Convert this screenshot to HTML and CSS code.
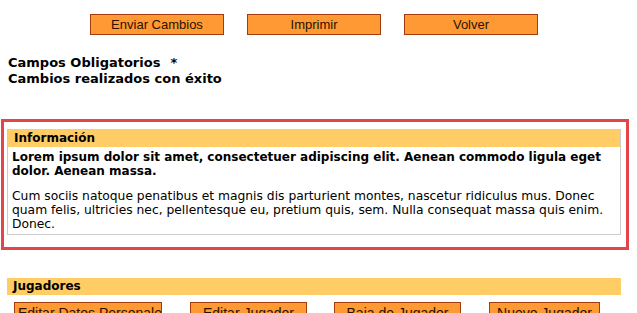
FILE: index.html
```html
<!DOCTYPE html>
<html>

<head>
    <title>Ficha del Equipo</title>
    <link rel="stylesheet" href="styles.css">
</head>

<body>

    <div class="toolbar">
        <button class="btn">Enviar Cambios</button>
        <button class="btn">Imprimir</button>
        <button class="btn">Volver</button>
    </div>

    <div class="notes">
        <p>Campos Obligatorios<span class="req">*</span></p>
        <p>Cambios realizados con éxito</p>
    </div>

    <div class="highlight">
        <div class="panel">
            <div class="panel-title">Información</div>
            <div class="panel-body">
                <p class="lead">Lorem ipsum dolor sit amet, consectetuer adipiscing elit. Aenean commodo ligula eget dolor. Aenean massa.</p>
                <p>Cum sociis natoque penatibus et magnis dis parturient montes, nascetur ridiculus mus. Donec quam felis, ultricies nec, pellentesque eu, pretium quis, sem. Nulla consequat massa quis enim. Donec.</p>
            </div>
        </div>
    </div>

    <div class="section">
        <div class="panel-title">Jugadores</div>
        <div class="actions">
            <button class="btn btn-small btn-left">Editar Datos Personales</button>
            <button class="btn btn-small">Editar Jugador</button>
            <button class="btn btn-small">Baja de Jugador</button>
            <button class="btn btn-small">Nuevo Jugador</button>
        </div>
    </div>

</body>

</html>
```

FILE: styles.css
```css
body {
    margin: 0;
    font-family: "DejaVu Sans", Verdana, sans-serif;
    font-size: 12px;
    color: #000;
    background-color: #fff;
    overflow: hidden;
}

.toolbar {
    display: flex;
    gap: 23px;
    padding: 14px 0 0 90px;
}

.btn {
    width: 134px;
    height: 21px;
    padding: 0;
    background-color: #ff9933;
    border: 1px solid #a33c0c;
    color: #2a1200;
    font-family: "Liberation Sans", Arial, sans-serif;
    font-size: 13px;
    white-space: nowrap;
    overflow: hidden;
}

.notes {
    padding: 20px 0 0 8px;
    font-size: 13px;
    font-weight: bold;
    line-height: 16px;
}

.notes p {
    margin: 0;
}

.req {
    margin-left: 10px;
}

/* Red frame around the info panel */
.highlight {
    margin: 32px 0 0 1px;
    width: 614px;
    padding: 7px 5px 12px 3px;
    border: 3px solid #e2464b;
}

.panel {
    border: 1px solid #cccccc;
    border-top: none;
}

.panel-title {
    background-color: #ffcc66;
    padding: 2px 6px;
    font-size: 12px;
    font-weight: bold;
    line-height: 14px;
}

.panel-body {
    padding: 3px 4px 3px 4px;
    font-size: 12.3px;
    line-height: 14px;
}

.panel-body p {
    margin: 0 0 12px 0;
}

.panel-body p:last-child {
    margin-bottom: 0;
}

.panel-body .lead {
    font-size: 12px;
    font-weight: bold;
    margin-bottom: 11px;
}

.section {
    margin: 28px 0 0 7px;
    width: 614px;
}

.section .panel-title {
    padding: 1px 6px 2px 6px;
}

.actions {
    display: flex;
    padding: 7px 0 0 7px;
}

.btn-small {
    width: auto;
    padding: 0 6px;
    font-size: 14px;
}

.btn-left {
    text-align: left;
    padding-left: 3px;
}

.actions .btn:nth-child(1) { width: 148px; margin-right: 28px; }
.actions .btn:nth-child(2) { width: 117px; margin-right: 27px; }
.actions .btn:nth-child(3) { width: 127px; margin-right: 28px; }
.actions .btn:nth-child(4) { width: 111px; }
```
